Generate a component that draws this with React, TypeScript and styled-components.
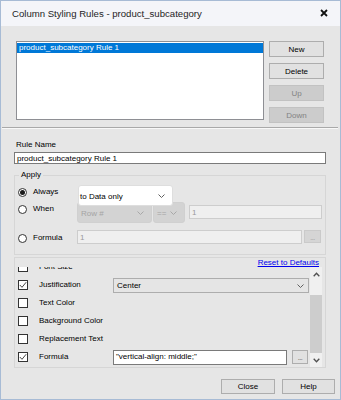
import styled, { createGlobalStyle } from 'styled-components';

const GlobalStyle = createGlobalStyle`
  html, body { margin: 0; padding: 0; background: #e6e6e6; }
  * { box-sizing: border-box; }
  body { font-family: "Liberation Sans", Arial, sans-serif; font-size: 8px; color: #000; }
`;

const Chevron = ({ color = '#606060' }: { color?: string }) => (
  <svg width="7" height="4" viewBox="0 0 7 4">
    <polyline points="0.5,0.5 3.5,3.5 6.5,0.5" fill="none" stroke={color} strokeWidth="1" />
  </svg>
);

const Arrow = ({ up }: { up?: boolean }) => (
  <svg width="7" height="5" viewBox="0 0 7 5">
    <polyline
      points={up ? '0.7,4.3 3.5,1.2 6.3,4.3' : '0.7,0.7 3.5,3.8 6.3,0.7'}
      fill="none"
      stroke="#505050"
      strokeWidth="1.3"
    />
  </svg>
);

const Window = styled.div`
  width: 341px;
  height: 400px;
  border: 1px solid #a7bbd5;
  background: #e6e6e6;
  display: flex;
  flex-direction: column;
  overflow: hidden;
`;

const TitleBar = styled.div`
  height: 25px;
  flex: none;
  background: #f4f5f9;
  display: flex;
  align-items: center;
  justify-content: space-between;
  padding: 0 11px 1px 11px;
  font-size: 9.6px;
  color: #1e1e1e;
`;

const CloseX = styled.svg`
  width: 8px;
  height: 8px;
  margin-right: 1px;
`;

const Body = styled.div`
  flex: 1;
  display: flex;
  flex-direction: column;
`;

const TopRow = styled.div`
  display: flex;
  margin-top: 15px;
  padding-left: 15px;
`;

const ListBox = styled.div`
  width: 248px;
  height: 79px;
  background: #fff;
  border: 1px solid #8e8f94;
  padding: 1px 0 0 0;
`;

const ListItem = styled.div<{ $selected?: boolean }>`
  height: 10px;
  line-height: 10px;
  padding-left: 2px;
  background: ${(p) => (p.$selected ? '#0078d7' : 'transparent')};
  color: ${(p) => (p.$selected ? '#fff' : '#000')};
`;

const ButtonColumn = styled.div`
  display: flex;
  flex-direction: column;
  gap: 6px;
  margin-left: 5px;
`;

const PushButton = styled.div<{ $w?: number; $h?: number; $disabled?: boolean }>`
  width: ${(p) => p.$w ?? 55}px;
  height: ${(p) => p.$h ?? 16}px;
  display: flex;
  align-items: center;
  justify-content: center;
  background: ${(p) => (p.$disabled ? '#cccccc' : '#e1e1e1')};
  border: 1px solid ${(p) => (p.$disabled ? '#c2c2c2' : '#adadad')};
  color: ${(p) => (p.$disabled ? '#838383' : '#000')};
`;

const Separator = styled.div`
  height: 2px;
  margin: 4px 2px 0 1px;
  border-top: 1px solid #a9a9a9;
  border-bottom: 1px solid #f8f8f8;
`;

const FieldLabel = styled.div`
  margin-top: 11px;
  padding-left: 15px;
  height: 10px;
  line-height: 10px;
`;

const TextBox = styled.div<{ $w: number; $h?: number; $disabled?: boolean }>`
  width: ${(p) => p.$w}px;
  height: ${(p) => p.$h ?? 14}px;
  flex: none;
  display: flex;
  align-items: center;
  padding-left: 2px;
  background: ${(p) => (p.$disabled ? '#efefef' : '#fff')};
  border: 1px solid ${(p) => (p.$disabled ? '#cdcdcd' : '#7a7a7a')};
  color: ${(p) => (p.$disabled ? '#9a9a9a' : '#000')};
  white-space: nowrap;
  overflow: hidden;
`;

const RuleNameBox = styled(TextBox)`
  margin: 2px 0 0 13px;
`;

const Group = styled.fieldset`
  margin: 6px 0 0 13px;
  width: 312px;
  padding: 5px 3px 10px 3px;
  border: 1px solid #d6d6d6;
  min-width: 0;
`;

const Legend = styled.legend`
  padding: 0 2px;
  margin-left: 1px;
  line-height: 10px;
  height: 10px;
`;

const ApplyRow = styled.div<{ $h: number; $top?: number; $raise?: boolean; $pad: number }>`
  display: flex;
  align-items: flex-start;
  height: ${(p) => p.$h}px;
  margin-top: ${(p) => p.$top ?? 0}px;
  ${(p) => (p.$raise ? 'position: relative; z-index: 1;' : '')}
  & > *:first-child { margin-top: ${(p) => p.$pad}px; }
`;

const Choice = styled.div`
  width: 60px;
  flex: none;
  display: flex;
  align-items: center;
  gap: 6px;
  height: 10px;
  line-height: 10px;
`;

const Radio = styled.span<{ $on?: boolean }>`
  width: 9px;
  height: 9px;
  border-radius: 50%;
  border: 1px solid #333;
  background: #fff;
  display: flex;
  align-items: center;
  justify-content: center;
  &::after {
    content: '';
    width: 5px;
    height: 5px;
    border-radius: 50%;
    background: ${(p) => (p.$on ? '#1a1a1a' : 'transparent')};
  }
`;

const Combo = styled.div<{ $w: number; $open?: boolean; $shift?: number }>`
  width: ${(p) => p.$w}px;
  height: 21px;
  flex: none;
  margin-left: ${(p) => p.$shift ?? 0}px;
  display: flex;
  align-items: center;
  justify-content: space-between;
  padding: 1px 7px 0 ${(p) => (p.$open ? 1 : 3)}px;
  border-radius: 3px;
  background: ${(p) => (p.$open ? '#fff' : '#d3d3d3')};
  border: 1px solid ${(p) => (p.$open ? '#dedede' : '#d0d0d0')};
  color: ${(p) => (p.$open ? '#000' : '#a4a4a4')};
`;

const SmallButton = styled.div<{ $w: number; $h: number; $disabled?: boolean; $left: number }>`
  width: ${(p) => p.$w}px;
  height: ${(p) => p.$h}px;
  flex: none;
  margin-left: ${(p) => p.$left}px;
  display: flex;
  align-items: center;
  justify-content: center;
  padding-top: 2px;
  font-size: 7px;
  letter-spacing: -0.5px;
  background: ${(p) => (p.$disabled ? '#d5d5d5' : '#e1e1e1')};
  border: 1px solid ${(p) => (p.$disabled ? '#cacaca' : '#adadad')};
  color: ${(p) => (p.$disabled ? '#9a9a9a' : '#555')};
`;

const Panel = styled.div`
  margin: 2px 0 0 13px;
  width: 312px;
  height: 111px;
  border: 1px solid #d6d6d6;
  display: flex;
  flex-direction: column;
`;

const PanelHeader = styled.div`
  height: 9px;
  display: flex;
  justify-content: flex-end;
  padding-right: 6px;
`;

const ResetLink = styled.span`
  line-height: 10px;
  margin-top: 0px;
  color: #0000ee;
  text-decoration: underline;
`;

const Viewport = styled.div`
  height: 100px;
  display: flex;
  padding-right: 3px;
`;

const RowsClip = styled.div`
  flex: 1;
  overflow: hidden;
`;

const Rows = styled.div`
  margin-top: -9px;
`;

const PropRow = styled.div`
  height: 18px;
  display: grid;
  grid-template-columns: 21px 74px 1fr;
  align-items: center;
  padding-left: 3px;
  line-height: 10px;
`;

const CheckBox = styled.span`
  width: 10px;
  height: 10px;
  border: 1px solid #333;
  background: #fff;
  display: flex;
  align-items: center;
  justify-content: center;
`;

const Control = styled.div`
  display: flex;
  align-items: center;
`;

const Select = styled.div`
  width: 196px;
  height: 15px;
  display: flex;
  align-items: center;
  justify-content: space-between;
  padding: 1px 4px 0 3px;
  background: #e5e5e5;
  border: 1px solid #adadad;
`;

const ScrollBar = styled.div`
  width: 12px;
  flex: none;
  display: flex;
  flex-direction: column;
  background: #f0f0f0;
`;

const ScrollArrow = styled.div`
  height: 14px;
  display: flex;
  align-items: center;
  justify-content: center;
`;

const ScrollThumb = styled.div`
  height: 58px;
  margin-top: 14px;
  background: #cdcdcd;
`;

const Footer = styled.div`
  display: flex;
  justify-content: flex-end;
  gap: 7px;
  margin-top: 11px;
  padding-right: 5px;
`;

const Check = () => (
  <svg width="8" height="8" viewBox="0 0 8 8">
    <polyline points="0.8,4 3,6.3 7.2,1.2" fill="none" stroke="#333" strokeWidth="0.9" />
  </svg>
);

const props = [
  { name: 'Font Size', on: false },
  { name: 'Justification', on: true, kind: 'select' },
  { name: 'Text Color', on: false },
  { name: 'Background Color', on: false },
  { name: 'Replacement Text', on: false },
  { name: 'Formula', on: true, kind: 'formula' },
];

export default function App() {
  return (
    <>
      <GlobalStyle />
      <Window>
        <TitleBar>
          <span>Column Styling Rules - product_subcategory</span>
          <CloseX viewBox="0 0 8 8">
            <path d="M1 1 L7 7 M7 1 L1 7" stroke="#111" strokeWidth="1.8" />
          </CloseX>
        </TitleBar>
        <Body>
          <TopRow>
            <ListBox>
              <ListItem $selected>product_subcategory Rule 1</ListItem>
            </ListBox>
            <ButtonColumn>
              <PushButton>New</PushButton>
              <PushButton>Delete</PushButton>
              <PushButton $disabled>Up</PushButton>
              <PushButton $disabled>Down</PushButton>
            </ButtonColumn>
          </TopRow>
          <Separator />
          <FieldLabel>Rule Name</FieldLabel>
          <RuleNameBox $w={312} $h={12}>product_subcategory Rule 1</RuleNameBox>
          <Group>
            <Legend>Apply</Legend>
            <ApplyRow $h={21} $pad={2} $raise>
              <Choice>
                <Radio $on />
                Always
              </Choice>
              <Combo $w={95} $open>
                <span>to Data only</span>
                <Chevron />
              </Combo>
            </ApplyRow>
            <ApplyRow $h={21} $top={-4} $pad={2}>
              <Choice>
                <Radio />
                When
              </Choice>
              <Combo $w={75} $shift={-1}>
                <span>Row #</span>
                <Chevron color="#a8a8a8" />
              </Combo>
              <Combo $w={32} $shift={1}>
                <span>==</span>
                <Chevron color="#a8a8a8" />
              </Combo>
              <TextBox $w={133} $disabled style={{ marginLeft: 4, marginTop: 3 }}>
                1
              </TextBox>
            </ApplyRow>
            <ApplyRow $h={14} $top={7} $pad={3}>
              <Choice>
                <Radio />
                Formula
              </Choice>
              <TextBox $w={225} $disabled style={{ marginLeft: -1 }}>
                1
              </TextBox>
              <SmallButton $w={17} $h={13} $left={2} $disabled>
                ...
              </SmallButton>
            </ApplyRow>
          </Group>
          <Panel>
            <PanelHeader>
              <ResetLink>Reset to Defaults</ResetLink>
            </PanelHeader>
            <Viewport>
              <RowsClip>
                <Rows>
                  {props.map((p) => (
                    <PropRow key={p.name}>
                      <CheckBox>{p.on && <Check />}</CheckBox>
                      <span>{p.name}</span>
                      <Control>
                        {p.kind === 'select' && (
                          <Select>
                            <span>Center</span>
                            <Chevron />
                          </Select>
                        )}
                        {p.kind === 'formula' && (
                          <>
                            <TextBox $w={174} $h={15}>
                              "vertical-align: middle;"
                            </TextBox>
                            <SmallButton $w={16} $h={14} $left={5}>
                              ...
                            </SmallButton>
                          </>
                        )}
                      </Control>
                    </PropRow>
                  ))}
                </Rows>
              </RowsClip>
              <ScrollBar>
                <ScrollArrow>
                  <Arrow up />
                </ScrollArrow>
                <ScrollThumb />
                <ScrollArrow>
                  <Arrow />
                </ScrollArrow>
              </ScrollBar>
            </Viewport>
          </Panel>
          <Footer>
            <PushButton $w={54} $h={15}>
              Close
            </PushButton>
            <PushButton $w={53} $h={15}>
              Help
            </PushButton>
          </Footer>
        </Body>
      </Window>
    </>
  );
}
